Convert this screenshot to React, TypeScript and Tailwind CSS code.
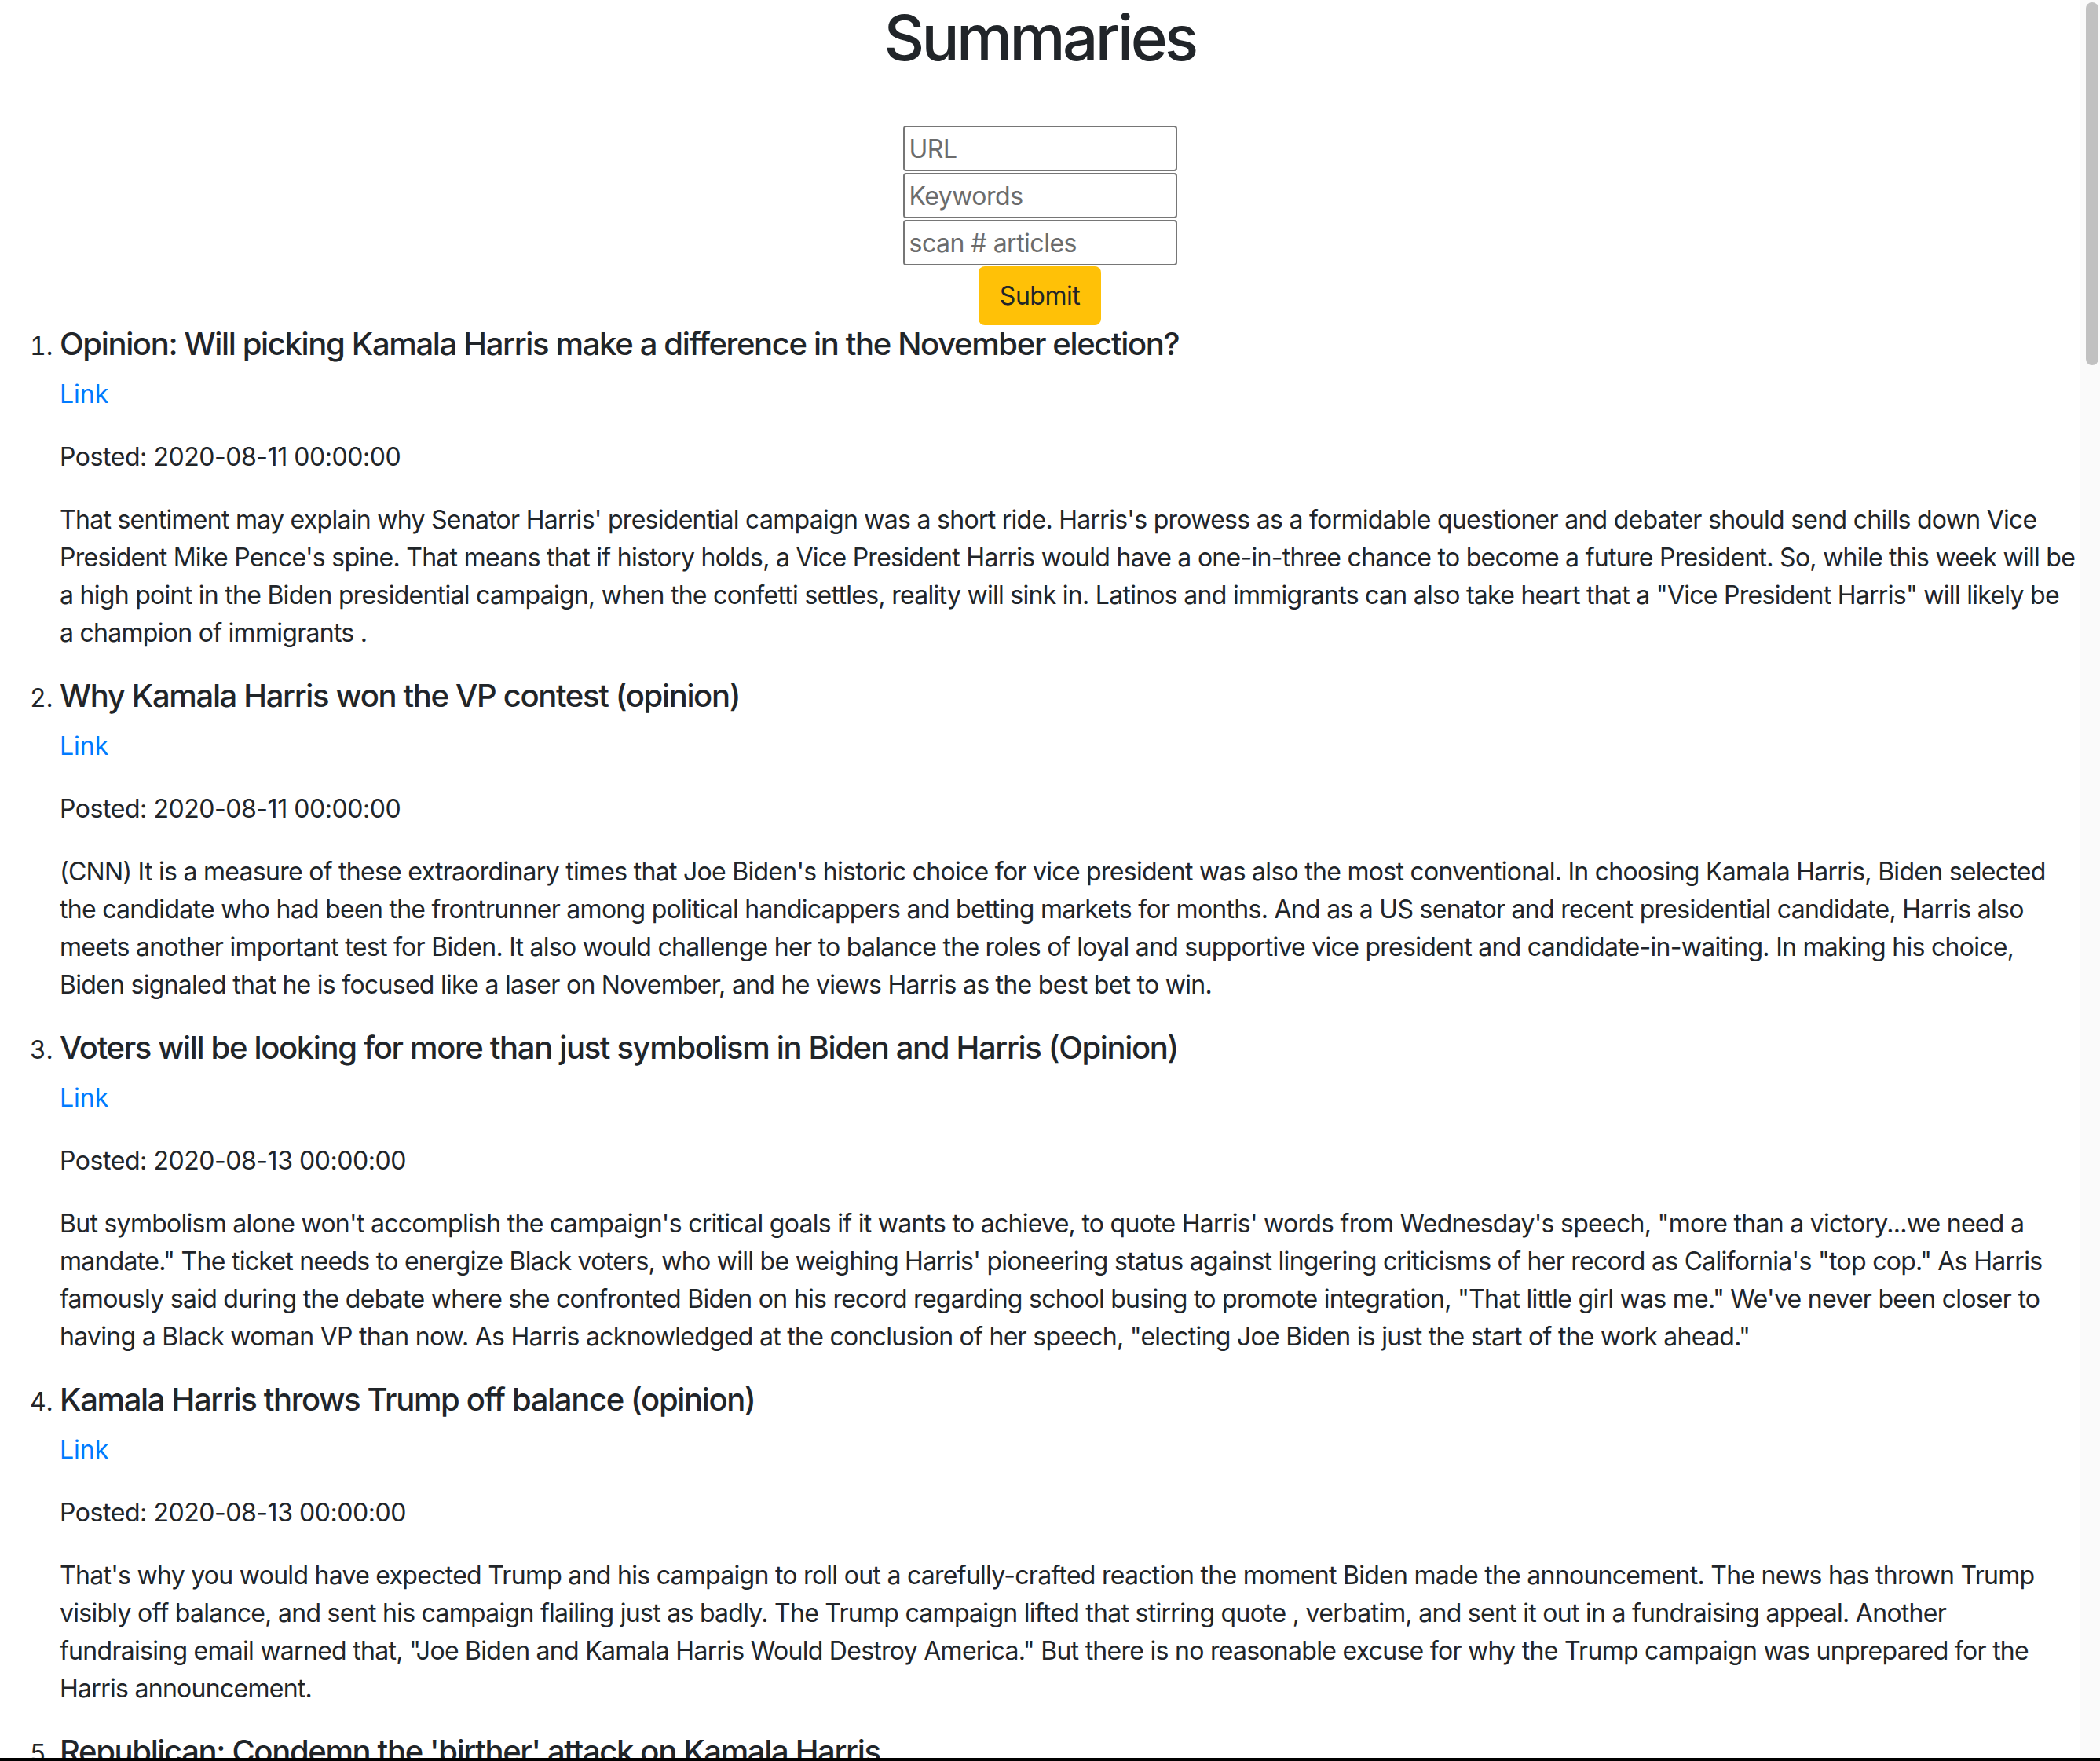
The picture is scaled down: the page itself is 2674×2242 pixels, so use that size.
const articles = [
  {
    title: 'Opinion: Will picking Kamala Harris make a difference in the November election?',
    posted: '2020-08-11 00:00:00',
    lines: [
      "That sentiment may explain why Senator Harris' presidential campaign was a short ride. Harris's prowess as a formidable questioner and debater should send chills down Vice",
      "President Mike Pence's spine. That means that if history holds, a Vice President Harris would have a one-in-three chance to become a future President. So, while this week will be",
      'a high point in the Biden presidential campaign, when the confetti settles, reality will sink in. Latinos and immigrants can also take heart that a "Vice President Harris" will likely be',
      'a champion of immigrants .',
    ],
  },
  {
    title: 'Why Kamala Harris won the VP contest (opinion)',
    posted: '2020-08-11 00:00:00',
    lines: [
      "(CNN) It is a measure of these extraordinary times that Joe Biden's historic choice for vice president was also the most conventional. In choosing Kamala Harris, Biden selected",
      'the candidate who had been the frontrunner among political handicappers and betting markets for months. And as a US senator and recent presidential candidate, Harris also',
      'meets another important test for Biden. It also would challenge her to balance the roles of loyal and supportive vice president and candidate-in-waiting. In making his choice,',
      'Biden signaled that he is focused like a laser on November, and he views Harris as the best bet to win.',
    ],
  },
  {
    title: 'Voters will be looking for more than just symbolism in Biden and Harris (Opinion)',
    posted: '2020-08-13 00:00:00',
    lines: [
      'But symbolism alone won\'t accomplish the campaign\'s critical goals if it wants to achieve, to quote Harris\' words from Wednesday\'s speech, "more than a victory...we need a',
      'mandate." The ticket needs to energize Black voters, who will be weighing Harris\' pioneering status against lingering criticisms of her record as California\'s "top cop." As Harris',
      'famously said during the debate where she confronted Biden on his record regarding school busing to promote integration, "That little girl was me." We\'ve never been closer to',
      'having a Black woman VP than now. As Harris acknowledged at the conclusion of her speech, "electing Joe Biden is just the start of the work ahead."',
    ],
  },
  {
    title: 'Kamala Harris throws Trump off balance (opinion)',
    posted: '2020-08-13 00:00:00',
    lines: [
      "That's why you would have expected Trump and his campaign to roll out a carefully-crafted reaction the moment Biden made the announcement. The news has thrown Trump",
      'visibly off balance, and sent his campaign flailing just as badly. The Trump campaign lifted that stirring quote , verbatim, and sent it out in a fundraising appeal. Another',
      'fundraising email warned that, "Joe Biden and Kamala Harris Would Destroy America." But there is no reasonable excuse for why the Trump campaign was unprepared for the',
      'Harris announcement.',
    ],
  },
  {
    title: "Republican: Condemn the 'birther' attack on Kamala Harris",
    posted: '2020-08-14 00:00:00',
    lines: [],
  },
];

function SummaryItem({ title, posted, lines }: { title: string; posted: string; lines: string[] }) {
  return (
    <li>
      <h5 className="text-[40px] leading-[48px] font-medium tracking-[-1.35px] mb-[16px]">{title}</h5>
      <p className="mb-[32px]">
        <a href="#" className="text-[#007bff]">
          Link
        </a>
      </p>
      <p className="mb-[32px] tracking-[-0.45px]">Posted: {posted}</p>
      <p className="mb-[32px] tracking-[-0.72px]">
        {lines.map((line, i) => (
          <span key={i}>
            {line}
            {i < lines.length - 1 && <br />}
          </span>
        ))}
      </p>
    </li>
  );
}

export default function App() {
  return (
    <div
      className="h-[2242px] flex flex-col overflow-hidden bg-white text-[#212529]"
      style={{ fontFamily: 'Inter, "Noto Sans", sans-serif' }}
    >
      <div className="flex-1 flex min-h-0">
        <div className="flex-1 min-w-0 overflow-hidden text-[32px] leading-[48px]">
          <h1 className="text-[80px] leading-[96px] font-medium tracking-[-3.6px] text-center">Summaries</h1>
          <form className="mt-[64px] flex flex-col items-center gap-[2px]">
            <input
              placeholder="URL"
              className="w-[349px] h-[58px] border-2 border-[#767676] rounded-[4px] px-[6px] text-[32px] tracking-[-0.5px] placeholder:text-[#6c6c6c]"
            />
            <input
              placeholder="Keywords"
              className="w-[349px] h-[58px] border-2 border-[#767676] rounded-[4px] px-[6px] text-[32px] tracking-[-0.5px] placeholder:text-[#6c6c6c]"
            />
            <input
              placeholder="scan # articles"
              className="w-[349px] h-[58px] border-2 border-[#767676] rounded-[4px] px-[6px] text-[32px] tracking-[-0.5px] placeholder:text-[#6c6c6c]"
            />
            <button
              type="button"
              className="-mt-[1px] w-[156px] h-[75px] rounded-[8px] bg-[#ffc107] text-[#212529] text-[32px] leading-[48px] tracking-[-0.5px]"
            >
              Submit
            </button>
          </form>
          <ol className="list-decimal pl-[76px] pr-0">
            {articles.map((a) => (
              <SummaryItem key={a.title} {...a} />
            ))}
          </ol>
        </div>
        <div className="w-[26px] shrink-0 border-l border-[#e8e8e8] bg-[#fafafa] pt-[3px] pl-[7px]">
          <div className="w-[16px] h-[462px] rounded-full bg-[#c1c1c1]" />
        </div>
      </div>
      <div className="h-[4px] bg-black" />
    </div>
  );
}
